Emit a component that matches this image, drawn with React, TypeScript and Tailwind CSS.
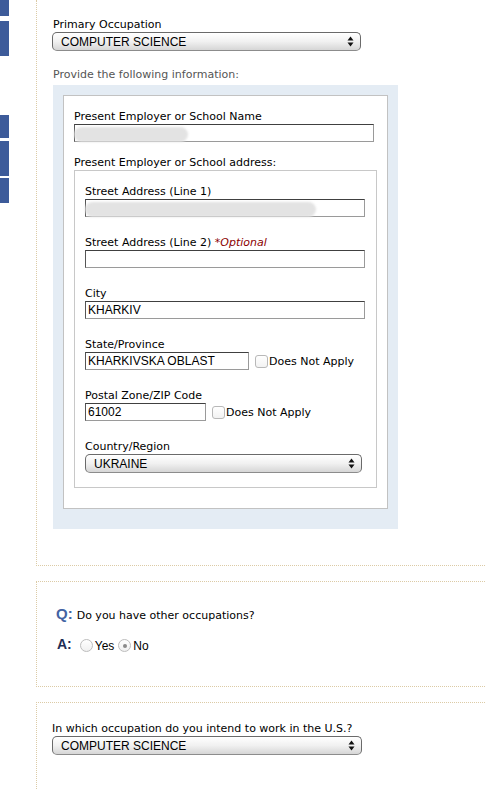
import React from 'react';

const label = "font-['DejaVu_Sans',sans-serif] text-[11px] leading-[15px] text-black";
const field = "font-['Liberation_Sans',Arial,sans-serif] text-[12px] text-black";

function Arrows() {
  return (
    <svg width="7" height="11" viewBox="0 0 7 11" className="shrink-0">
      <path d="M3.5 0.5 L6.5 4.5 L0.5 4.5 Z" fill="#111" />
      <path d="M3.5 10.5 L6.5 6.5 L0.5 6.5 Z" fill="#111" />
    </svg>
  );
}

function Select({ value, width }: { value: string; width: string }) {
  return (
    <div
      className={`${width} h-[19px] flex items-center justify-between pl-[8px] pr-[6px] rounded-[5px] border border-[#6a6a6a] border-b-[#8c8c8c] bg-gradient-to-b from-white via-[#f1f1f1] to-[#d6d6d6] shadow-[inset_0_1px_0_#fff] ${field} leading-none`}
    >
      <span className="pt-[1px]">{value}</span>
      <Arrows />
    </div>
  );
}

function Input({ width, value, blur }: { width: string; value?: string; blur?: string }) {
  return (
    <div
      className={`relative ${width} h-[18px] border border-[#9a9a9a] border-t-[#404040] border-l-[#555] bg-white flex items-center pl-[2px] ${field} leading-none`}
    >
      {value}
      {blur && (
        <div className={`absolute left-[-1px] top-[2px] h-[15px] ${blur} rounded-full bg-[#e3e3e3] blur-[1px]`} />
      )}
    </div>
  );
}

function Check() {
  return (
    <div className="flex items-center gap-[1px]">
      <div className="w-[13px] h-[13px] rounded-[3px] border border-[#b8b8b8] bg-gradient-to-b from-white to-[#f2f2f2]" />
      <span className={label}>Does Not Apply</span>
    </div>
  );
}

function Radio({ on }: { on?: boolean }) {
  return (
    <div className="w-[13px] h-[13px] rounded-full border border-[#bdbdbd] bg-gradient-to-b from-white to-[#f0f0f0] flex items-center justify-center">
      {on && <div className="w-[4px] h-[4px] rounded-full bg-[#8a8a8a]" />}
    </div>
  );
}

function Field({ title, children, first }: { title: React.ReactNode; children: React.ReactNode; first?: boolean }) {
  return (
    <div className={first ? '' : 'mt-[18px]'}>
      <div className={label}>{title}</div>
      {children}
    </div>
  );
}

export default function App() {
  const blocks = ['mt-0 h-[16px]', 'mt-[5px] h-[35px]', 'mt-[59px] h-[23px]', 'mt-[3px] h-[35px]', 'mt-[2px] h-[25px]'];

  return (
    <div className="relative flex w-[485px] h-[789px] overflow-hidden bg-white">
      <div className="w-[9px] shrink-0 flex flex-col">
        {blocks.map((b, i) => (
          <div key={i} className={`${b} w-[9px] bg-[#3d5b9a]`} />
        ))}
      </div>

      <div className="ml-[27px] flex-1 flex flex-col">
        {/* occupation + employer */}
        <div className="border-l border-b border-dotted border-[#dccba6] pl-[15px] pt-[17px] pb-[36px]">
          <div className={`${label} leading-[14px] pl-[1px]`}>Primary Occupation</div>
          <Select value="COMPUTER SCIENCE" width="w-[309px]" />
          <div className="mt-[17px] pl-[1px] font-['DejaVu_Sans',sans-serif] text-[11px] leading-[14px] text-[#555]">
            Provide the following information:
          </div>

          <div className="mt-[3px] ml-[1px] w-[345px] bg-[#e4ecf4] pt-[10px] px-[10px] pb-[20px]">
            <div className="w-[325px] bg-white border border-[#c2c2c2] pl-[10px] pt-[13px] pb-[20px]">
              <div className={label}>Present Employer or School Name</div>
              <Input width="w-[300px]" blur="w-[114px]" />
              <div className={`${label} mt-[13px]`}>Present Employer or School address:</div>

              <div className="w-[303px] border border-[#c8c8c8] pl-[10px] pt-[13px] pb-[14px]">
                <Field title="Street Address (Line 1)" first>
                  <Input width="w-[280px]" blur="w-[231px]" />
                </Field>
                <Field
                  title={
                    <>
                      Street Address (Line 2) <span className="italic text-[#8b0000]">*Optional</span>
                    </>
                  }
                >
                  <Input width="w-[280px]" />
                </Field>
                <Field title="City">
                  <Input width="w-[280px]" value="KHARKIV" />
                </Field>
                <Field title="State/Province">
                  <div className="flex items-center gap-[6px]">
                    <Input width="w-[164px]" value="KHARKIVSKA OBLAST" />
                    <Check />
                  </div>
                </Field>
                <Field title="Postal Zone/ZIP Code">
                  <div className="flex items-center gap-[6px]">
                    <Input width="w-[121px]" value="61002" />
                    <Check />
                  </div>
                </Field>
                <Field title="Country/Region">
                  <Select value="UKRAINE" width="w-[277px]" />
                </Field>
              </div>
            </div>
          </div>
        </div>

        {/* other occupations */}
        <div className="mt-[15px] h-[106px] border-l border-t border-b border-dotted border-[#dccba6] pl-[19px] pt-[23px]">
          <div className="flex items-baseline gap-[4px]">
            <span className="font-['Liberation_Sans',Arial,sans-serif] font-bold text-[15px] leading-[18px] text-[#4363a3]">Q:</span>
            <span className="font-['DejaVu_Sans',sans-serif] text-[11px] text-black">Do you have other occupations?</span>
          </div>
          <div className="mt-[14px] flex items-center">
            <span className="pl-[1px] font-['Liberation_Sans',Arial,sans-serif] font-bold text-[14px] leading-[16px] text-[#1f2d55] -mt-[3px]">A:</span>
            <div className="ml-[8px] flex items-center font-['Liberation_Sans',Arial,sans-serif] text-[12px] leading-[14px] text-black">
              <Radio />
              <span className="ml-[2px]">Yes</span>
              <div className="ml-[4px]">
                <Radio on />
              </div>
              <span className="ml-[2px]">No</span>
            </div>
          </div>
        </div>

        {/* intended occupation */}
        <div className="mt-[15px] flex-1 border-l border-t border-dotted border-[#dccba6] pl-[15px] pt-[18px]">
          <div className={`${label} leading-[14px]`}>In which occupation do you intend to work in the U.S.?</div>
          <Select value="COMPUTER SCIENCE" width="w-[310px]" />
        </div>
      </div>
    </div>
  );
}
